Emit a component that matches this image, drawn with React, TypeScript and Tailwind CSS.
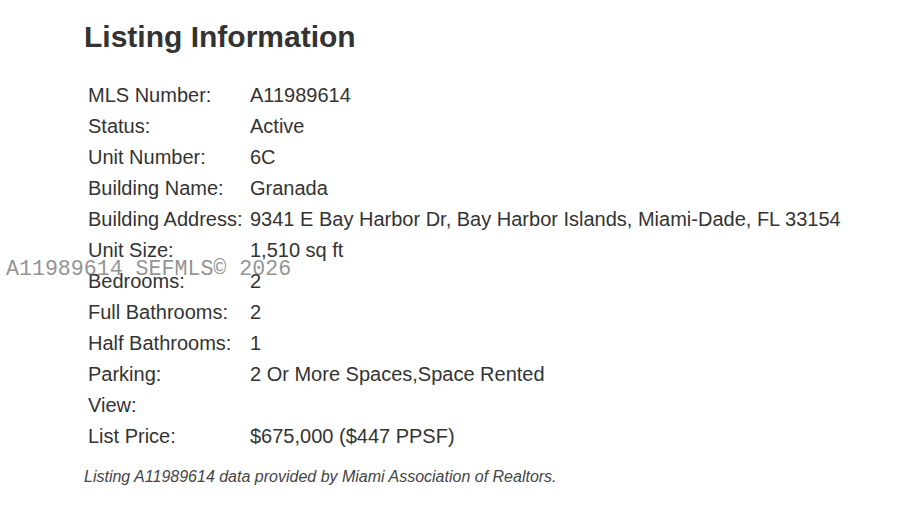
import React from 'react'

const rows: [string, string][] = [
  ['MLS Number:', 'A11989614'],
  ['Status:', 'Active'],
  ['Unit Number:', '6C'],
  ['Building Name:', 'Granada'],
  ['Building Address:', '9341 E Bay Harbor Dr, Bay Harbor Islands, Miami-Dade, FL 33154'],
  ['Unit Size:', '1,510 sq ft'],
  ['Bedrooms:', '2'],
  ['Full Bathrooms:', '2'],
  ['Half Bathrooms:', '1'],
  ['Parking:', '2 Or More Spaces,Space Rented'],
  ['View:', ''],
  ['List Price:', '$675,000 ($447 PPSF)'],
]

export default function App() {
  return (
    <div className="relative h-[529px] w-[900px] overflow-hidden bg-white font-['Liberation_Sans',Arial,sans-serif] text-[#333]">
      <div className="pl-[84px] pt-[19px]">
        <h1 className="text-[30px] font-bold leading-[36px] text-[#333]">Listing Information</h1>

        <div className="mt-[25px] grid grid-cols-[162px_1fr] pl-1 text-[20px] leading-[31px]">
          {rows.map(([label, value]) => (
            <React.Fragment key={label}>
              <div className="whitespace-nowrap">{label}</div>
              <div className="whitespace-nowrap">{value}</div>
            </React.Fragment>
          ))}
        </div>

        <p className="mt-[15px] text-[16px] italic leading-[20px] text-[#444]">
          Listing A11989614 data provided by Miami Association of Realtors.
        </p>
      </div>

      {/* watermark laid over the listing */}
      <div className="pointer-events-none absolute left-[6px] top-[256px] whitespace-nowrap font-['Liberation_Mono',monospace] text-[21.6px] leading-[26px] text-[#7a7a7a] opacity-80">
        A11989614 SEFMLS© 2026
      </div>
    </div>
  )
}
